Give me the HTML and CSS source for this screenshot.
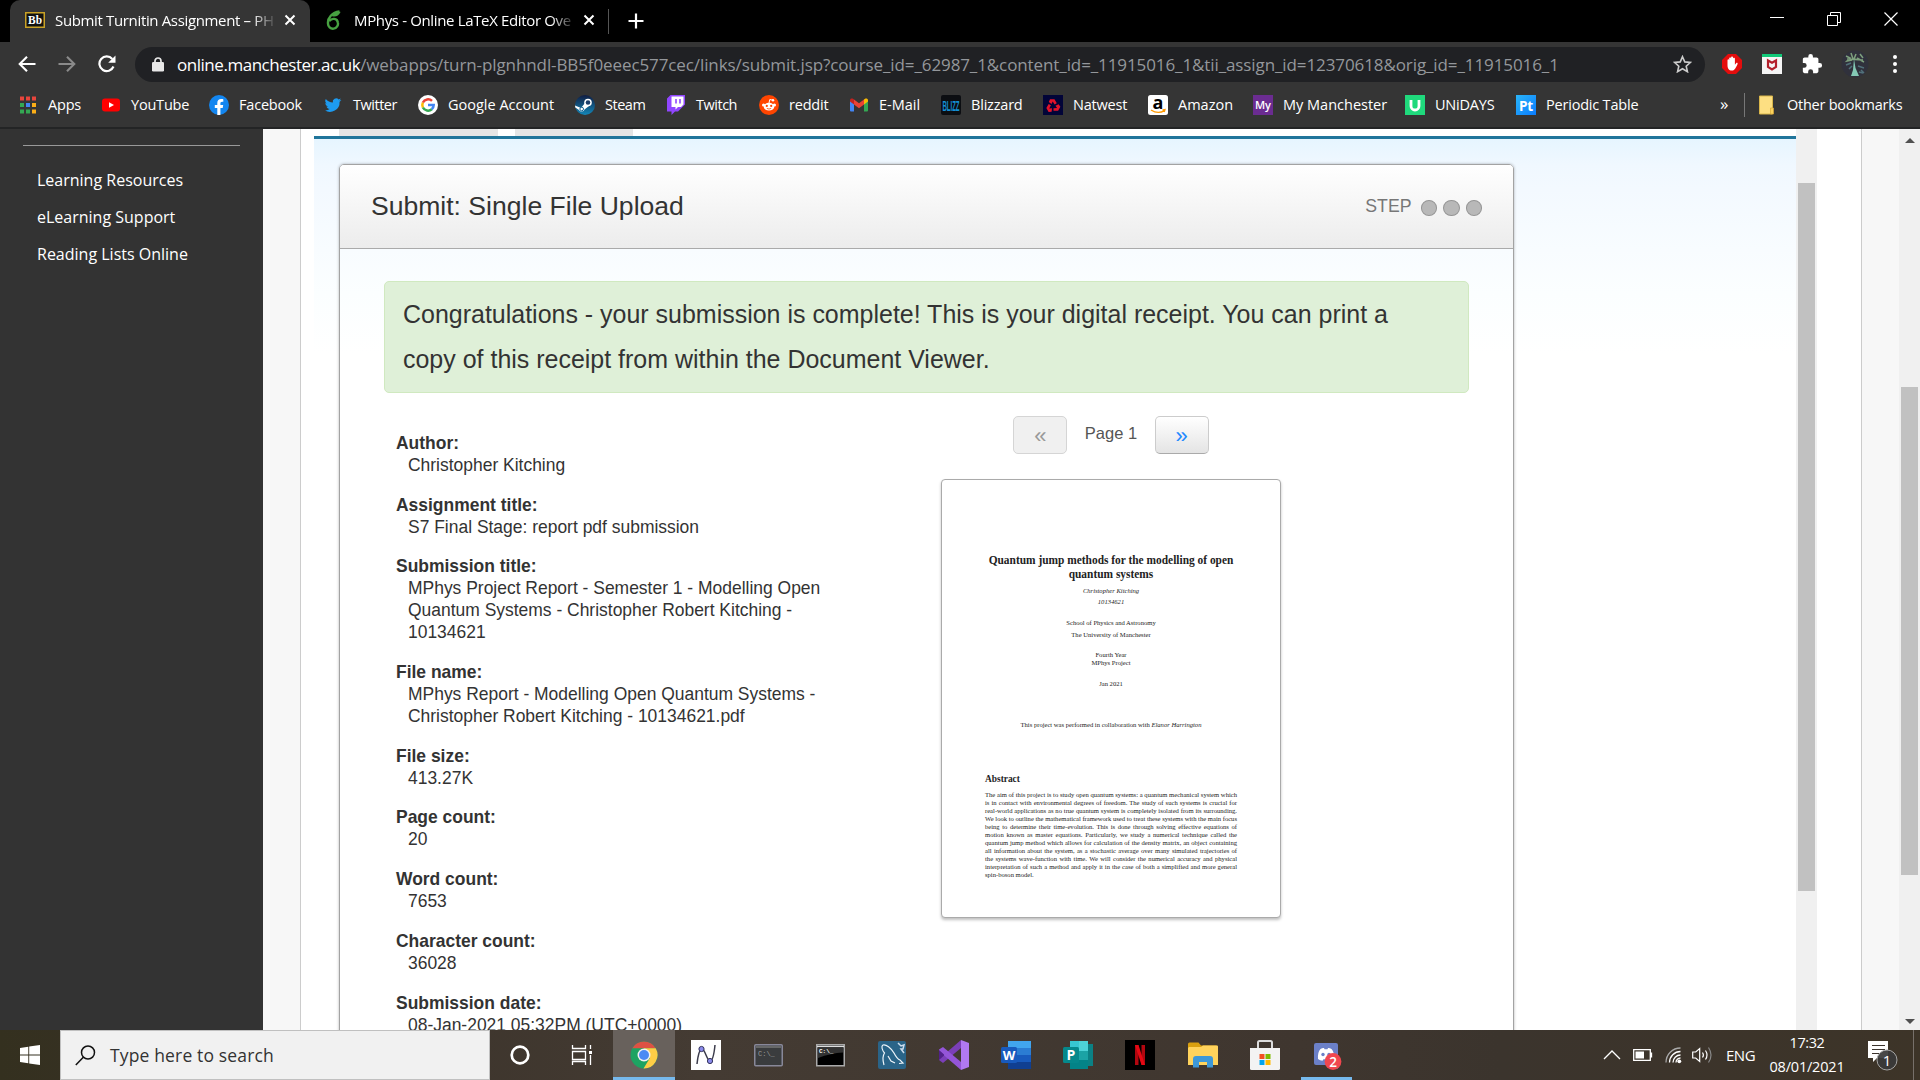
FILE: index.html
```html
<!DOCTYPE html>
<html lang="en">
<head>
<meta charset="utf-8">
<title>Submit Turnitin Assignment</title>
<link rel="stylesheet" href="styles.css">
</head>
<body>
<div class="screen">
  <header class="browser">
    <div class="tabstrip">
      <div class="tab tab-active">
        <svg class="fav" width="20" height="16" viewBox="0 0 20 16"><rect x=".75" y=".75" width="18.5" height="14.5" fill="#111" stroke="#c9a227" stroke-width="1.5"/><text x="10" y="12.4" text-anchor="middle" font-family="Liberation Serif, serif" font-weight="700" font-size="13" fill="#fff" textLength="14" lengthAdjust="spacingAndGlyphs">Bb</text></svg>
        <span class="tab-title">Submit Turnitin Assignment – PH</span>
        <svg class="x" width="12" height="12" viewBox="0 0 12 12"><path d="M1.5 1.5l9 9M10.5 1.5l-9 9" stroke="#fff" stroke-width="2"/></svg>
      </div>
      <div class="tab tab-second">
        <svg class="fav" width="20" height="20" viewBox="0 0 20 20"><path d="M15.500 1.500C8 2.500 3.500 8 4 13.500a5 5 0 1 0 9.800-1.200c-.6-4-6-4.600-8.500-1.300M8.500 5.200c3 .7 5.500-.7 7-3.700" fill="none" stroke="#47a141" stroke-width="2.400"/></svg>
        <span class="tab-title">MPhys - Online LaTeX Editor Ove</span>
        <svg class="x" width="12" height="12" viewBox="0 0 12 12"><path d="M1.500 1.500l9 9M10.500 1.500l-9 9" stroke="#fff" stroke-width="2"/></svg>
      </div>
      <span class="tab-sep"></span>
      <svg class="plus" width="16" height="16" viewBox="0 0 16 16"><path d="M8 .500v15M.500 8h15" stroke="#fff" stroke-width="2.200"/></svg>
      <div class="wincontrols">
        <svg width="14" height="14" viewBox="0 0 14 14"><path d="M0 5.500h14" stroke="#fff"/></svg>
        <svg width="14" height="14" viewBox="0 0 14 14"><path d="M.500 3.500h10v10h-10zM3.500 3V.500h10v10H11" fill="none" stroke="#fff"/></svg>
        <svg width="14" height="14" viewBox="0 0 14 14"><path d="M.500 .500l13 13M13.500 .500l-13 13" stroke="#fff" stroke-width="1.200"/></svg>
      </div>
    </div>
    <div class="toolbar">
      <div class="nav">
        <svg width="18" height="18" viewBox="0 0 18 18"><path d="M17.500 9H2M9 1.700L1.700 9 9 16.300" fill="none" stroke="#fff" stroke-width="2.100"/></svg>
        <svg width="18" height="18" viewBox="0 0 18 18"><path d="M.500 9H16M9 1.700L16.300 9 9 16.300" fill="none" stroke="#8a8a8a" stroke-width="2.100"/></svg>
        <svg width="18" height="18" viewBox="0 0 18 18"><path d="M15.500 11.500A7.300 7.300 0 1 1 14.300 4" fill="none" stroke="#fff" stroke-width="2.200"/><path d="M17.500 .500v7.300h-7.300z" fill="#fff"/></svg>
      </div>
      <div class="omnibox">
        <svg class="lock" width="12" height="15" viewBox="0 0 12 15"><path d="M3 6V4a3 3 0 0 1 6 0v2" fill="none" stroke="#e8e8e8" stroke-width="1.700"/><rect y="5" width="12" height="9.500" rx="1.300" fill="#e8e8e8"/></svg>
        <span class="url"><b class="host">online.manchester.ac.uk</b><span class="path">/webapps/turn-plgnhndl-BB5f0eeec577cec/links/submit.jsp?course_id=_62987_1&amp;content_id=_11915016_1&amp;tii_assign_id=12370618&amp;orig_id=_11915016_1</span></span>
        <svg class="star" width="19" height="18" viewBox="0 0 20 19"><path d="M10 1.800l2.400 5.500 6 .500-4.500 4 1.300 5.800L10 14.500l-5.200 3.100 1.300-5.800-4.500-4 6-.500z" fill="none" stroke="#ccc" stroke-width="1.700"/></svg>
      </div>
      <div class="ext">
        <svg width="22" height="22" viewBox="0 0 22 22"><path d="M7 1h8l6 6v8l-6 6H7l-6-6V7z" fill="#e40d0d"/><path d="M6.500 12V7.300c0-1.300 1.700-1.300 1.700 0V5.500c0-1.400 1.900-1.400 1.900 0V4.600c0-1.400 1.900-1.400 1.900 0v1.200c0-1.400 1.900-1.400 1.900 0v6l1.200-1.600c.8-1 2 0 1.400 1-1.600 3-2.500 6.300-5.500 6.300-3.300 0-4.500-2-4.500-5.500z" fill="#fff"/></svg>
        <svg width="22" height="22" viewBox="0 0 22 22"><rect x="1" y="1" width="20" height="20" fill="#f5f5f5"/><rect x="1" y="1" width="20" height="3" fill="#11c978"/><path d="M7 7.500l4 2.300 4-2.300V14l-4 2.500L7 14z" fill="none" stroke="#b3202c" stroke-width="2.200"/></svg>
        <svg width="22" height="22" viewBox="0 0 24 24"><path d="M20.500 11H19V7c0-1.100-.9-2-2-2h-4V3.500a2.500 2.500 0 0 0-5 0V5H4c-1.100 0-2 .9-2 2v3.800h1.500a2.700 2.700 0 0 1 0 5.400H2V20c0 1.100.9 2 2 2h3.800v-1.500a2.700 2.700 0 0 1 5.400 0V22H17c1.100 0 2-.9 2-2v-4h1.500a2.500 2.500 0 0 0 0-5z" fill="#fff"/></svg>
        <svg width="28" height="28" viewBox="0 0 28 28"><circle cx="14" cy="14" r="13.500" fill="#30313c"/><path d="M5 6l4 2-3 3 5-1M10 3l2 6M15 4l-2 5 5 1M19 4l3 4M16 8l7 4M6 9l16 1" stroke="#7da07e" stroke-width="1.500" fill="none"/><path d="M5 15l5-2M8 19l3-3M17 16l6 2M20 20l3 3M18 22l4 1" stroke="#51707a" stroke-width="1.500" fill="none"/><path d="M13 9l1.500 9 3.500 8H10l2-6z" fill="#84c9b5"/></svg>
        <svg width="6" height="18" viewBox="0 0 6 18"><circle cx="3" cy="2" r="2" fill="#fff"/><circle cx="3" cy="9" r="2" fill="#fff"/><circle cx="3" cy="16" r="2" fill="#fff"/></svg>
      </div>
    </div>
    <nav class="bookmarks">
      <a class="bm"><svg viewBox="0 0 20 20"><path d="M2 1.500h4v4H2zM8 1.500h4v4H8zM14 1.500h4v4h-4z" fill="#e8453c"/><path d="M2 8h4v4H2zM2 14.500h4v4H2zM8 14.500h4v4H8z" fill="#34a853"/><path d="M8 8h4v4H8z" fill="#4285f4"/><path d="M14 8h4v4h-4zM14 14.500h4v4h-4z" fill="#fbae17"/></svg><span>Apps</span></a>
      <a class="bm"><svg viewBox="0 0 20 20"><rect x="1" y="3.500" width="18" height="13" rx="3" fill="#f00"/><path d="M8 7.200v5.600l5-2.800z" fill="#fff"/></svg><span>YouTube</span></a>
      <a class="bm"><svg viewBox="0 0 20 20"><circle cx="10" cy="10" r="10" fill="#1386f0"/><path d="M8.300 20v-7H5.800v-2.900h2.500V8c0-2.600 1.500-4 3.800-4 1.100 0 2.200.2 2.200.2v2.500h-1.200c-1.300 0-1.700.8-1.700 1.600v1.800h2.800l-.5 2.900h-2.300v7z" fill="#fff"/></svg><span>Facebook</span></a>
      <a class="bm tight"><svg viewBox="0 0 24 24"><path d="M22 5.900c-.7.300-1.500.5-2.400.6.900-.5 1.500-1.300 1.800-2.200-.8.500-1.700.8-2.600 1a4.100 4.100 0 0 0-7 3.700A11.600 11.600 0 0 1 3.400 4.700a4.100 4.100 0 0 0 1.300 5.500c-.7 0-1.300-.2-1.900-.5 0 2 1.400 3.700 3.300 4.100-.6.200-1.200.2-1.900.1.500 1.600 2 2.800 3.800 2.800A8.200 8.200 0 0 1 2 18.400 11.600 11.600 0 0 0 19.900 8c.8-.6 1.500-1.300 2.100-2.100z" fill="#1d9bf0"/></svg><span>Twitter</span></a>
      <a class="bm wide"><svg viewBox="0 0 20 20"><circle cx="10" cy="10" r="10" fill="#fff"/><path d="M4.900 12.500a5.700 5.700 0 0 1 0-5" stroke="#fbbc05" stroke-width="2.500" fill="none"/><path d="M4.900 7.500A5.800 5.800 0 0 1 14 5.900" stroke="#ea4335" stroke-width="2.500" fill="none"/><path d="M4.900 12.500a5.800 5.800 0 0 0 8.900 1.800" stroke="#34a853" stroke-width="2.500" fill="none"/><path d="M10 10h5.700a5.800 5.800 0 0 1-2 4.300" stroke="#4285f4" stroke-width="2.500" fill="none"/></svg><span>Google Account</span></a>
      <a class="bm tight"><svg viewBox="0 0 20 20"><defs><linearGradient id="steam" x2="0" y2="1"><stop stop-color="#111d42"/><stop offset="1" stop-color="#1387b8"/></linearGradient></defs><circle cx="10" cy="10" r="10" fill="url(#steam)"/><path d="M0 10.500l6 2.500 4-5 4 3-4.500 3.500A3 3 0 0 1 4 15L.300 12.500z" fill="#fff"/><circle cx="13" cy="7.500" r="3.800" fill="#fff"/><circle cx="13" cy="7.500" r="2.300" fill="#1a3d68"/><circle cx="6.700" cy="14" r="1.800" fill="none" stroke="#1a6796"/></svg><span>Steam</span></a>
      <a class="bm tight"><svg viewBox="0 0 20 20"><path d="M4.500 0L1 3.500v13h4.500V20L9 16.500h3l7-7V0z" fill="#9146ff"/><path d="M5.500 1.500h12v8L15 12h-3l-2.500 2.500V12h-4z" fill="#fff"/><path d="M10 4v4.500M14 4v4.500" stroke="#9146ff" stroke-width="1.600"/></svg><span>Twitch</span></a>
      <a class="bm"><svg viewBox="0 0 20 20"><circle cx="10" cy="10" r="10" fill="#ff4500"/><ellipse cx="10" cy="11.700" rx="5.300" ry="3.900" fill="#fff"/><circle cx="4.600" cy="10" r="1.600" fill="#fff"/><circle cx="15.400" cy="10" r="1.600" fill="#fff"/><path d="M10 8l.8-3.500 3 .7" stroke="#fff" fill="none"/><circle cx="14" cy="5.200" r="1.200" fill="#fff"/><circle cx="7.800" cy="10.900" r="1.100" fill="#ff4500"/><circle cx="12.200" cy="10.900" r="1.100" fill="#ff4500"/><path d="M7.800 13.400q2.200 1.300 4.400 0" stroke="#ff4500" fill="none" stroke-width=".8"/></svg><span>reddit</span></a>
      <a class="bm wide"><svg viewBox="0 0 20 20"><path d="M1 5v10.500q0 1 1 1h3V8z" fill="#4285f4"/><path d="M19 5v10.500q0 1-1 1h-3V8z" fill="#34a853"/><path d="M5 4.500l5 3.800 5-3.800v5l-5 3.800-5-3.800z" fill="#ea4335"/><path d="M1 5.500c0-2 2-2.500 3.300-1.500L5 4.500v5l-4-3z" fill="#c5221f"/><path d="M19 5.500c0-2-2-2.500-3.300-1.500l-.7.500v5l4-3z" fill="#fbbc04"/></svg><span>E-Mail</span></a>
      <a class="bm"><svg viewBox="0 0 20 20"><rect width="20" height="20" rx="2" fill="#0c0e12"/><text x="1.500" y="15.500" font-family="Liberation Sans, sans-serif" font-weight="700" font-size="15.500" fill="#148fd6" textLength="17" lengthAdjust="spacingAndGlyphs">BLIZZ</text></svg><span>Blizzard</span></a>
      <a class="bm"><svg viewBox="0 0 20 20"><path fill="#020438" d="M0 0h20v20H0z"/><g fill="#e3122a"><path d="M7 4.200h4.500l2.300 4-2.200 1.300L9.700 6.500 8.500 9 5.800 7z"/><path d="M7 4.200h4.500l2.300 4-2.200 1.300L9.700 6.500 8.500 9 5.800 7z" transform="rotate(120 10 11)"/><path d="M7 4.200h4.500l2.300 4-2.200 1.300L9.700 6.500 8.500 9 5.800 7z" transform="rotate(240 10 11)"/></g></svg><span>Natwest</span></a>
      <a class="bm wide"><svg viewBox="0 0 20 20"><rect width="20" height="20" rx="2.500" fill="#fff"/><text x="10" y="13.500" text-anchor="middle" font-family="Open Sans, sans-serif" font-weight="700" font-size="18" fill="#000">a</text><path d="M3 15q7 4.500 13.500.6M14.500 14.800l2.500-.2-.8 2.400" stroke="#f90" fill="none" stroke-width="1.300"/></svg><span>Amazon</span></a>
      <a class="bm wide"><svg viewBox="0 0 20 20"><path fill="#6b2c91" d="M0 0h20v20H0z"/><text x="10" y="14" text-anchor="middle" font-family="Open Sans, sans-serif" font-weight="600" font-size="11" fill="#fff">My</text></svg><span>My Manchester</span></a>
      <a class="bm"><svg viewBox="0 0 20 20"><path fill="#1fd97c" d="M0 0h20v20H0z"/><path d="M6 5v6a4 4 0 0 0 8 0V5" fill="none" stroke="#fff" stroke-width="2.800"/></svg><span>UNiDAYS</span></a>
      <a class="bm"><svg viewBox="0 0 20 20"><defs><linearGradient id="pt" x2="1" y2="1"><stop stop-color="#2ab5f8"/><stop offset="1" stop-color="#0a7cff"/></linearGradient></defs><path fill="url(#pt)" d="M0 0h20v20H0z"/><text x="10" y="15.500" text-anchor="middle" font-family="Open Sans, sans-serif" font-weight="700" font-size="13.500" fill="#fff">Pt</text></svg><span>Periodic Table</span></a>
      <span class="more">»</span>
      <a class="bm other"><svg viewBox="0 0 20 20"><path d="M2.500 1h13v18h-13z" fill="#fddf82" stroke="#d9b64a"/><path d="M13.500 13h3v6h-3z" fill="#fbd25c" stroke="#d9a93a" stroke-width=".7"/></svg><span>Other bookmarks</span></a>
    </nav>
  </header>

  <main class="page">
    <aside class="sidebar">
      <hr>
      <a>Learning Resources</a>
      <a>eLearning Support</a>
      <a>Reading Lists Online</a>
    </aside>
    <div class="gutter"></div>
    <section class="content">
      <div class="frame">
        <div class="frame-tabs"><i class="ft1"></i><i class="ft2"></i></div>
        <div class="frame-body">
          <div class="card">
            <div class="card-head">
              <h1>Submit: Single File Upload</h1>
              <div class="step"><span>STEP</span><i></i><i></i><i></i></div>
            </div>
            <div class="card-body">
              <p class="notice">Congratulations - your submission is complete! This is your digital receipt. You can print a<br>copy of this receipt from within the Document Viewer.</p>
              <div class="columns">
                <dl class="details">
                  <dt>Author:</dt><dd>Christopher Kitching</dd>
                  <dt>Assignment title:</dt><dd>S7 Final Stage: report pdf submission</dd>
                  <dt>Submission title:</dt><dd>MPhys Project Report - Semester 1 - Modelling Open<br>Quantum Systems - Christopher Robert Kitching -<br>10134621</dd>
                  <dt>File name:</dt><dd>MPhys Report - Modelling Open Quantum Systems -<br>Christopher Robert Kitching - 10134621.pdf</dd>
                  <dt>File size:</dt><dd>413.27K</dd>
                  <dt>Page count:</dt><dd>20</dd>
                  <dt>Word count:</dt><dd>7653</dd>
                  <dt>Character count:</dt><dd>36028</dd>
                  <dt>Submission date:</dt><dd>08-Jan-2021 05:32PM (UTC+0000)</dd>
                </dl>
                <div class="preview">
                  <div class="pager">
                    <span class="btn off">«</span>
                    <span class="pagenum">Page 1</span>
                    <span class="btn">»</span>
                  </div>
                  <article class="paper">
                    <h2>Quantum jump methods for the modelling of open<br>quantum systems</h2>
                    <p class="who"><em>Christopher Kitching</em><br><em>10134621</em></p>
                    <p class="school">School of Physics and Astronomy<br>The University of Manchester</p>
                    <p class="year">Fourth Year<br>MPhys Project</p>
                    <p class="date">Jan 2021</p>
                    <p class="collab">This project was performed in collaboration with <em>Elanor Harrington</em></p>
                    <h3>Abstract</h3>
                    <div class="abstract">
                      <p>The aim of this project is to study open quantum systems: a quantum mechanical system which</p>
                      <p>is in contact with environmental degrees of freedom. The study of such systems is crucial for</p>
                      <p>real-world applications as no true quantum system is completely isolated from its surrounding.</p>
                      <p>We look to outline the mathematical framework used to treat these systems with the main focus</p>
                      <p>being to determine their time-evolution. This is done through solving effective equations of</p>
                      <p>motion known as master equations. Particularly, we study a numerical technique called the</p>
                      <p>quantum jump method which allows for calculation of the density matrix, an object containing</p>
                      <p>all information about the system, as a stochastic average over many simulated trajectories of</p>
                      <p>the systems wave-function with time. We will consider the numerical accuracy and physical</p>
                      <p>interpretation of such a method and apply it in the case of both a simplified and more general</p>
                      <p class="last">spin-boson model.</p>
                    </div>
                  </article>
                </div>
              </div>
            </div>
          </div>
        </div>
      </div>
      <div class="inner-scroll"><i></i></div>
    </section>
    <div class="gutter"></div>
    <div class="outer-scroll"><b class="up"></b><i></i><b class="down"></b></div>
  </main>

  <footer class="taskbar">
    <div class="start"><svg width="20" height="20" viewBox="0 0 20 20"><path d="M0 2.900L8.300 1.700v7.800H0zM9.200 1.600L20 0v9.500H9.200zM0 10.400h8.300v7.900L0 17.100zM9.200 10.400H20V20L9.200 18.400z" fill="#fff"/></svg></div>
    <div class="search"><svg width="21" height="21" viewBox="0 0 21 21"><circle cx="13" cy="7.500" r="6.500" fill="none" stroke="#111" stroke-width="1.500"/><path d="M8.300 12.300L.800 20" stroke="#111" stroke-width="1.500"/></svg><span>Type here to search</span></div>
    <div class="apps">
      <div class="app"><svg width="22" height="22" viewBox="0 0 22 22"><circle cx="11" cy="11" r="8.300" fill="none" stroke="#fff" stroke-width="2.700"/></svg></div>
      <div class="app"><svg width="22" height="22" viewBox="0 0 22 22"><path d="M1.500 1v3.500h13V1M1.500 21v-3.500h13V21M1.500 7.500h13v8h-13zM19.500 1v4M19.500 11v10" fill="none" stroke="#fff" stroke-width="1.300"/><path d="M18 7h3v3h-3z" fill="#fff"/></svg></div>
      <div class="app active"><svg width="28" height="28" viewBox="0 0 28 28"><circle cx="14" cy="14" r="13.500" fill="#1da362"/><path d="M14 14L2.300 7.300A13.500 13.500 0 0 1 25.700 7.300H14z" fill="#dd5144"/><path d="M14 7.300h11.700A13.500 13.500 0 0 1 13.500 27.500L19.800 17.300z" fill="#ffcd46"/><path d="M2.300 7.300L8.500 17.800l5.500-10.500z" fill="#1da362"/><circle cx="14" cy="14" r="6.500" fill="#f1f1f1"/><circle cx="14" cy="14" r="5" fill="#4a8af4"/></svg></div>
      <div class="app"><svg width="30" height="30" viewBox="0 0 30 30"><path fill="#fff" d="M0 0h30v30H0z"/><path d="M6 24C7 15 9 9 11 9c3 0 5 12 8 12 2 0 4-6 5-16" fill="none" stroke="#3b3b4b" stroke-width="1.500"/><circle cx="10.500" cy="9" r="2.600" fill="#8b8bec" stroke="#33335a"/><circle cx="19" cy="21" r="2.600" fill="#8b8bec" stroke="#33335a"/></svg></div>
      <div class="app"><svg width="29" height="23" viewBox="0 0 29 23"><rect x=".75" y=".75" width="27.500" height="21" rx="1" fill="#3a3c3e" stroke="#889" stroke-width="1.500"/><path d="M2 3h25" stroke="#777" stroke-width="1.500"/><text x="4" y="12" font-family="Liberation Mono, monospace" font-size="7" fill="#999">C:\_</text></svg></div>
      <div class="app"><svg width="29" height="23" viewBox="0 0 29 23"><path d="M.75 .75h27.500v21H.75z" fill="#000" stroke="#aaa" stroke-width="1.500"/><path d="M1 2.500h27" stroke="#ddd" stroke-width="1.500"/><path d="M2 14Q15 9 27 8.500V4H2z" fill="#333"/><text x="3" y="9" font-family="Liberation Mono, monospace" font-size="6" font-weight="700" fill="#fff">C:\_</text></svg></div>
      <div class="app"><svg width="28" height="28" viewBox="0 0 28 28"><rect width="28" height="28" rx="2" fill="#2a6488"/><path d="M6 24C4.500 19 4.500 15 6.500 12 4 9 3 5 5 4c3-1 8 3 11 8 2 4 3 6 6 7l3 3-4 .5M10 15l3 5 4 2" fill="none" stroke="#eef5fa" stroke-width="1.200"/><path d="M20 2l3 3 3-1-1 4-2 0 3 4" stroke="#cde" stroke-width="1.500" fill="none"/></svg></div>
      <div class="app"><svg width="30" height="30" viewBox="0 0 30 30"><path d="M22 0l8 3v24l-8 3z" fill="#b179f1"/><path d="M22 0v8L4 23l-4-3v-1z" fill="#7b3fb8"/><path d="M22 30v-8L4 7 0 9.500V11z" fill="#9455d8"/><path d="M0 10l5 4.500v1L0 20z" fill="#52218a"/></svg></div>
      <div class="app"><svg width="30" height="28" viewBox="0 0 30 28"><path fill="#41a5ee" d="M7 0h23v7H7z"/><path fill="#2b7cd3" d="M7 7h23v7H7z"/><path fill="#185abd" d="M7 14h23v7H7z"/><path fill="#103f91" d="M7 21h23v7H7z"/><rect y="6" width="16" height="16" rx="1.500" fill="#185abd"/><text x="8" y="19" text-anchor="middle" font-family="Open Sans, sans-serif" font-weight="700" font-size="13" fill="#fff">W</text></svg></div>
      <div class="app"><svg width="30" height="28" viewBox="0 0 30 28"><path fill="#0b8185" d="M20 3h10v22H20z"/><path fill="#37c6d0" d="M7 0h10v10H7z"/><path fill="#4dd3d8" d="M16 0h9v10h-9z"/><path fill="#038387" d="M7 10h18v18H7z"/><path fill="#1ba3a5" d="M16 10h9v9h-9z"/><rect y="6" width="16" height="16" rx="1.500" fill="#05888b"/><text x="8" y="19" text-anchor="middle" font-family="Open Sans, sans-serif" font-weight="700" font-size="14" fill="#fff">P</text></svg></div>
      <div class="app"><svg width="30" height="30" viewBox="0 0 30 30"><path fill="#000" d="M0 0h30v30H0z"/><path d="M10 5h3.500v20H10zM16.500 5H20v20h-3.500z" fill="#b1060f"/><path d="M10 5h3.500L20 25h-3.500z" fill="#e50914"/></svg></div>
      <div class="app"><svg width="30" height="26" viewBox="0 0 30 26"><path d="M0 2q0-1.500 1.500-1.500h9L13 3.500H28q1 0 1 1V8H0z" fill="#d9a010"/><path d="M1 5h12l2-1.500h14q1 0 1 1V23H0V6z" fill="#ffd35c"/><path d="M5 25.500V17q0-3 3-3h14q3 0 3 3v8.500h-6V20h-8v5.500z" fill="#3d98d8"/></svg></div>
      <div class="app"><svg width="30" height="30" viewBox="0 0 30 30"><path d="M8 10V2.500Q8 1 9.500 1h11Q22 1 22 2.500V10" fill="none" stroke="#ddd" stroke-width="2"/><path fill="#f3f3f3" d="M0 8h30v20.500q0 1.500-1.500 1.500h-27Q0 30 0 28.500z"/><path fill="#f25022" d="M9.500 14h5v5h-5z"/><path fill="#7fba00" d="M15.500 14h5v5h-5z"/><path fill="#00a4ef" d="M9.500 20h5v5h-5z"/><path fill="#ffb900" d="M15.500 20h5v5h-5z"/></svg></div>
      <div class="app running"><svg width="30" height="30" viewBox="0 0 30 30"><path d="M4 3h20q2 0 2 2v24l-5-4H4q-2 0-2-2V5q0-2 2-2z" fill="#6b80c8"/><path d="M6 19q-.5-7 2.500-10 2-1.300 3.500-1l.5 1.300h3L16 8q1.500-.3 3.500 1 3 3 2.500 10-2 1.800-4.500 1.800l-1-1.500h-5l-1 1.500Q8 20.800 6 19z" fill="#fff"/><circle cx="11" cy="14.500" r="1.700" fill="#6b80c8"/><circle cx="17" cy="14.500" r="1.700" fill="#6b80c8"/><circle cx="21" cy="21.500" r="8.400" fill="#f0474f"/><text x="21" y="26.500" text-anchor="middle" font-family="Open Sans, sans-serif" font-size="13.500" font-weight="600" fill="#fff">2</text></svg></div>
    </div>
    <div class="tray">
      <svg width="18" height="18" viewBox="0 0 18 18"><path d="M1 13l8-8 8 8" fill="none" stroke="#fff" stroke-width="1.300"/></svg>
      <svg class="batt" width="20" height="12" viewBox="0 0 20 12"><path d="M.700 .700h16.600v10.600H.700zM18.500 3.500v5" fill="none" stroke="#fff" stroke-width="1.300"/><path fill="#fff" d="M2.500 2.500h8.500v7H2.500z"/></svg>
      <svg class="wifi" width="17" height="17" viewBox="0 0 17 17"><g fill="none" stroke="#fff" stroke-width="1.300"><path d="M1 15.500A14.500 14.500 0 0 1 15.500 1" stroke="#aaa"/><path d="M4.500 15.500a11 11 0 0 1 11-11M8 15.500A7.500 7.500 0 0 1 15.500 8M11 15.500a4.500 4.500 0 0 1 4.500-4.500"/></g><circle cx="14.300" cy="14.300" r="1.900" fill="#fff"/></svg>
      <svg class="vol" width="21" height="18" viewBox="0 0 21 18"><path d="M.700 6v6h3l4 3.500v-13l-4 3.500z" fill="none" stroke="#fff" stroke-width="1.200"/><path d="M10.500 6.500q1.800 2.500 0 5M13.500 4.500q3 4.500 0 9" fill="none" stroke="#fff" stroke-width="1.200"/><path d="M16.500 1.500q5 7.500 0 15" fill="none" stroke="#888" stroke-width="1.200"/></svg>
      <span class="lang">ENG</span>
      <div class="clock"><span class="time">17:32</span><span>08/01/2021</span></div>
      <svg class="notif" width="32" height="32" viewBox="0 0 32 32"><path d="M1 2h20v17H10l-4 4v-4H1z" fill="#fff"/><path d="M5 6.500h13M5 10.500h13M5 14.500h8" stroke="#3c342e" stroke-width="1.200"/><circle cx="20" cy="21" r="10" fill="#3a3a3a" fill-opacity=".93" stroke="#a5a5a5"/><text x="20" y="26.500" text-anchor="middle" font-family="Open Sans, sans-serif" font-size="15" fill="#fff">1</text></svg>
      <i class="peek"></i>
    </div>
  </footer>
</div>
</body>
</html>
```
FILE: styles.css
```css
* { box-sizing: border-box; }
body { margin: 0; background: #000; font-family: "Open Sans", "Noto Sans", sans-serif; }
svg { display: block; flex: none; }
.screen { width: 1920px; height: 1080px; overflow: hidden; display: flex; flex-direction: column; }

.browser { flex: none; height: 129px; background: #353535; border-bottom: 2px solid #232425; color: #fff; }
.tabstrip { height: 42px; background: #000; display: flex; align-items: center; padding-left: 10px; }
.tab { width: 300px; height: 42px; display: flex; align-items: center; padding: 0 14px 2px 15px; font-size: 15px; }
.tab-active { background: #353535; border-radius: 10px 10px 0 0; }
.tab-second { padding: 0 15px 2px 14px; }
.tab-title { margin-left: 10px; width: 230px; white-space: nowrap; overflow: hidden; letter-spacing: -.35px; mask-image: linear-gradient(90deg, #000 86%, transparent 97%); }
.tab-sep { width: 1px; height: 25px; background: #555; margin-left: -2px; }
.plus { margin-left: 19px; }
.wincontrols { margin: -4px 22px 0 auto; display: flex; gap: 43px; }
.toolbar { height: 44px; display: flex; align-items: center; }
.nav { width: 135px; padding-left: 18px; display: flex; gap: 22px; }
.omnibox { width: 1570px; height: 35px; border-radius: 18px; background: #202124; display: flex; align-items: center; padding: 0 13px 0 17px; }
.url { margin-left: 13px; flex: 1; white-space: nowrap; font-size: 17px; color: #94979b; letter-spacing: -.1px; }
.host { font-weight: 400; color: #fff; letter-spacing: -.47px; }
.ext { flex: 1; display: flex; align-items: center; padding-left: 16px; gap: 18px; }
.ext svg:last-child { margin-left: 5px; }
.bookmarks { height: 37px; padding-left: 18px; display: grid; align-items: center; grid-template-columns: 83px 108px 114px 95px 157px 91px 93px 90px 92px 102px 105px 105px 152px 111px 204px 24px auto; font-size: 14.500px; }
.bm { display: flex; align-items: center; gap: 10px; white-space: nowrap; letter-spacing: -.2px; }
.bm.tight { letter-spacing: -.48px; }
.bm.wide { letter-spacing: 0; }
.bm svg { width: 20px; height: 20px; }
.more { font-size: 17px; margin-top: -3px; }
.bm.other { border-left: 1px solid #777; padding-left: 12px; height: 24px; letter-spacing: -.25px; }

.page { flex: none; height: 901px; display: flex; background: #fff; overflow: hidden; }
.sidebar { width: 263px; background: #333; color: #fff; font-size: 16px; padding: 16px 23px; }
.sidebar hr { border: 0; border-top: 1px solid #999; margin: 0 0 16px; }
.sidebar a { display: block; line-height: 37px; padding-left: 14px; white-space: nowrap; }
.content { width: 1562px; border-left: 1px solid #ccc; border-right: 1px solid #ccc; padding-left: 13px; display: flex; }
.frame { width: 1482px; }
.frame-tabs { height: 7px; display: flex; gap: 17px; padding-left: 25px; }
.frame-tabs i { background: #e5e5e5; width: 159px; }
.frame-tabs .ft2 { width: 118px; }
.frame-body { height: 894px; overflow: hidden; border-top: 3px solid #20759b; padding: 25px 0 0 25px; background: linear-gradient(#e6f5ff 0, #f0f8ff 26px, #f3f9ff 50px, #f8fcff 110px, #fbfeff 155px, #fff 215px); font-family: "Liberation Sans", Arial, sans-serif; color: #333; }
.card { width: 1175px; height: 940px; border: 1px solid #a3a3a3; border-radius: 5px; box-shadow: 0 0 3px rgba(0,0,0,.3); }
.card-head { height: 84px; border-bottom: 1px solid #aaa; border-radius: 4px 4px 0 0; background: linear-gradient(#fff, #ececec); display: flex; align-items: center; justify-content: space-between; padding: 0 31px 0 31px; }
.card-head h1 { margin: 0; font-size: 26.550px; font-weight: 400; }
.step { display: flex; align-items: center; gap: 6px; font-size: 17.700px; color: #777; }
.step span { margin-right: 3px; }
.step i { width: 16.500px; height: 16px; margin-top: 2px; border-radius: 50%; background: #b8b8b8; border: 1px solid #959595; }
.card-body { padding: 32px 44px 0; }
.notice { margin: 0; height: 112px; background: #dff0d8; border: 1px solid #d0e9c0; border-radius: 5px; padding: 10px 18px; font-size: 24.970px; line-height: 45px; white-space: nowrap; }
.columns { display: flex; }
.details { margin: 39px 0 0 12px; width: 545px; font-size: 17.470px; line-height: 22px; white-space: nowrap; }
.details dt { font-weight: 700; }
.details dd { margin: 0 0 17.700px 12px; }
.preview { width: 340px; padding-top: 23px; }
.pager { display: flex; justify-content: center; gap: 17.500px; font-size: 16.500px; color: #555; }
.pagenum { line-height: 34px; }
.btn { width: 54px; height: 38px; border: 1px solid #ccc; border-bottom-color: #aaa; border-radius: 5px; background: linear-gradient(#fff, #e4e4e4); color: #1e88ff; font-size: 22px; line-height: 37px; text-align: center; }
.btn.off { background: #f0f0f0; border-color: #d5d5d5; color: #999; }
.paper { margin-top: 25px; width: 340px; height: 439px; border: 1px solid #aaa; border-radius: 4px; box-shadow: 0 2px 3px rgba(0,0,0,.25); background: #fff; font: 6.600px/8px "Liberation Serif", "Times New Roman", serif; color: #222; padding: 73px 43px 0; text-align: center; white-space: nowrap; }
.paper h2 { margin: 0 -10px; font-size: 11.420px; line-height: 14px; }
.paper p { margin: 0; }
.paper .who { margin-top: 4px; line-height: 11.300px; }
.paper .school { margin-top: 9.800px; line-height: 11.300px; }
.paper .year { margin-top: 10.600px; line-height: 8.300px; }
.paper .date { margin-top: 12.800px; }
.paper .collab { margin-top: 33px; }
.paper h3 { margin: 45px 0 7.500px; font-size: 9.400px; line-height: 10px; text-align: left; }
.abstract p { text-align: justify; text-align-last: justify; font-size: 6.600px; line-height: 7.970px; }
.abstract .last { text-align-last: left; }
.inner-scroll { width: 21px; background: #f0f0f0; padding: 54px 2px 0; }
.inner-scroll i { display: block; height: 708px; background: #c1c1c1; }
.gutter { width: 37px; background: #f7f7f7; }
.outer-scroll { width: 21px; background: #f0f0f0; padding: 9px 2px 6px; display: flex; flex-direction: column; align-items: center; }
.outer-scroll i { width: 17px; height: 488px; background: #c1c1c1; margin: 244px 0 auto; }
.up, .down { width: 0; border: 5px solid transparent; border-top: 0; border-bottom: 5px solid #505050; }
.down { border-bottom: 0; border-top: 5px solid #505050; }

.taskbar { flex: none; height: 50px; display: flex; background: linear-gradient(90deg, #34301f 0, #3a3229 300px, #443b33 700px, #3f362f 1300px, #3b342d 1500px, #3d3428 1920px); color: #fff; }
.start { width: 60px; display: flex; align-items: center; justify-content: center; }
.search { width: 430px; background: #f1f1f1; border: 1px solid #c0c0c0; display: flex; align-items: center; gap: 14px; padding-left: 14px; color: #333; font-size: 17.500px; letter-spacing: .15px; white-space: nowrap; }
.apps { display: flex; margin-left: -1px; }
.app { width: 62.050px; display: flex; align-items: center; justify-content: center; }
.app.active { background: #68615c; box-shadow: inset 0 -3px #76b9ed; }
.app.running { background: linear-gradient(#76b9ed, #76b9ed) 50% 100% / 51px 3px no-repeat; }
.tray { margin-left: auto; width: 317px; display: flex; align-items: center; }
.batt { margin-left: 12px; }
.wifi { margin-left: 12px; }
.vol { margin-left: 10px; }
.lang { margin-left: 13px; font-size: 15px; width: 28px; letter-spacing: -.5px; }
.clock { width: 76px; margin-left: 15px; display: flex; flex-direction: column; align-items: center; font-size: 14.500px; line-height: 24px; letter-spacing: -.2px; }
.time { letter-spacing: -.4px; }
.notif { margin-left: 22px; }
.peek { width: 1px; height: 50px; margin-left: 14px; background: #77706a; }
```
